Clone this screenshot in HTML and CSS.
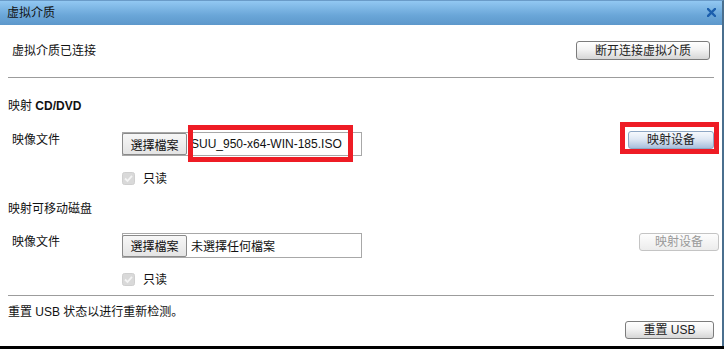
FILE: index.html
```html
<!DOCTYPE html>
<html>
<head>
<meta charset="utf-8">
<link rel="stylesheet" href="styles.css">
</head>
<body>
<div class="dialog">
  <div class="titlebar">
    <span class="title">虚拟介质</span>
    <svg class="close" width="9" height="9" viewBox="0 0 9 9"><path d="M1 1 L8 8 M8 1 L1 8" stroke="#1c5fad" stroke-width="2.4" stroke-linecap="square"/></svg>
  </div>
  <div class="body">
    <div class="row top-row">
      <span class="status">虚拟介质已连接</span>
      <button class="btn btn-disconnect">断开连接虚拟介质</button>
    </div>
    <div class="sep sep1"></div>
    <div class="heading h1">映射 <b>CD/DVD</b></div>
    <div class="row file-row r1">
      <span class="label">映像文件</span>
      <div class="file">
        <span class="file-btn">選擇檔案</span>
        <span class="file-name">SUU_950-x64-WIN-185.ISO</span>
        <span class="mark mark-file"></span>
      </div>
      <div class="right">
        <button class="btn btn-blue">映射设备</button>
        <span class="mark mark-btn"></span>
      </div>
    </div>
    <div class="check-row c1">
      <svg class="cb" width="13" height="13" viewBox="0 0 13 13"><rect x="0.5" y="0.5" width="12" height="12" rx="2" fill="#d9d9d9" stroke="#cfcfcf"/><path d="M3 6.5 L5.5 9 L10 3.8" fill="none" stroke="#f4f4f4" stroke-width="1.8"/></svg>
      <span>只读</span>
    </div>
    <div class="heading h2">映射可移动磁盘</div>
    <div class="row file-row r2">
      <span class="label">映像文件</span>
      <div class="file">
        <span class="file-btn">選擇檔案</span>
        <span class="file-name">未選擇任何檔案</span>
      </div>
      <div class="right">
        <button class="btn btn-disabled">映射设备</button>
      </div>
    </div>
    <div class="check-row c2">
      <svg class="cb" width="13" height="13" viewBox="0 0 13 13"><rect x="0.5" y="0.5" width="12" height="12" rx="2" fill="#d9d9d9" stroke="#cfcfcf"/><path d="M3 6.5 L5.5 9 L10 3.8" fill="none" stroke="#f4f4f4" stroke-width="1.8"/></svg>
      <span>只读</span>
    </div>
    <div class="sep sep2"></div>
    <div class="reset-text">重置 USB 状态以进行重新检测。</div>
    <div class="reset-row">
      <button class="btn btn-reset">重置 USB</button>
    </div>
  </div>
  <div class="footer-bar"></div>
</div>
</body>
</html>
```

FILE: styles.css
```css
html, body {
  margin: 0;
  padding: 0;
  background: #fff;
}
body {
  width: 724px;
  height: 349px;
  overflow: hidden;
  font-family: "Liberation Sans", "Noto Sans CJK SC", sans-serif;
  font-size: 12px;
  color: #111;
}
.dialog {
  width: 724px;
  height: 349px;
  display: flex;
  flex-direction: column;
}
.titlebar {
  height: 25px;
  box-sizing: border-box;
  border-top: 1px solid #6a9bc8;
  border-right: 2px solid #4a6f8e;
  background: linear-gradient(#92c8f2, #6aa6d8 60%, #5d98cb);
  display: flex;
  align-items: center;
  justify-content: space-between;
  padding: 0 6px 0 7px;
}
.title {
  font-size: 12px;
  line-height: 14px;
  color: #111;
}
.close {
  display: block;
  margin-top: -2px;
}
.body {
  flex: 1;
  background: #fff;
  border-right: 2px solid #4a6f8e;
  padding: 0 8px;
  display: flex;
  flex-direction: column;
}
.row {
  display: flex;
}
.top-row {
  margin-top: 16px;
  height: 19px;
  align-items: center;
  justify-content: space-between;
}
.status {
  padding-left: 4px;
  line-height: 14px;
}
.btn {
  font-family: "Liberation Sans", "Noto Sans CJK SC", sans-serif;
  font-size: 12px;
  color: #222;
  padding: 0;
  margin: 0;
  border: 1px solid #7c7c7c;
  border-radius: 3px;
  background: linear-gradient(#ffffff, #f3f3f3 45%, #d6d6d6);
  line-height: 14px;
  box-sizing: border-box;
}
.btn-disconnect {
  width: 134px;
  height: 19px;
  margin-right: 4px;
}
.sep {
  height: 1px;
  background: #9c9c9c;
}
.sep1 {
  margin-top: 17px;
}
.heading {
  line-height: 14px;
  height: 14px;
}
.heading b {
  font-weight: bold;
}
.h1 {
  margin-top: 21px;
}
.file-row {
  align-items: flex-start;
}
.r1 {
  margin-top: 19px;
  height: 24px;
}
.label {
  width: 110px;
  margin-left: 4px;
  line-height: 14px;
  padding-top: 1px;
}
.file {
  position: relative;
  width: 240px;
  height: 24px;
  box-sizing: border-box;
  border: 1px solid #a8a8a8;
  display: flex;
  align-items: center;
}
.file-btn {
  width: 65px;
  height: 22px;
  box-sizing: border-box;
  border: 1px solid #8a8a8a;
  border-radius: 2px;
  background: linear-gradient(#f7f7f7, #e4e4e4);
  display: flex;
  align-items: center;
  justify-content: center;
  color: #111;
  margin-left: -1px;
}
.file-name {
  padding-left: 4px;
  color: #111;
}
.mark {
  position: absolute;
  border: 5px solid #ee1c25;
  box-sizing: border-box;
  pointer-events: none;
}
.mark-file {
  left: 65px;
  top: -8px;
  width: 165px;
  height: 37px;
}
.right {
  position: relative;
  margin-left: auto;
}
.btn-blue {
  width: 86px;
  height: 18px;
  margin-top: -1px;
  border: 1px solid #8ea7c4;
  background: linear-gradient(#f6f9fd, #dfe8f4 45%, #a8bfdc);
  display: block;
}
.mark-btn {
  left: -8px;
  top: -10px;
  width: 99px;
  height: 32px;
}
.check-row {
  display: flex;
  align-items: center;
  height: 13px;
  margin-left: 114px;
  line-height: 14px;
}
.cb {
  display: block;
  margin-right: 8px;
}
.c1 {
  margin-top: 16px;
}
.h2 {
  margin-top: 17px;
}
.r2 {
  margin-top: 17px;
  height: 25px;
}
.r2 .file {
  height: 25px;
}
.r2 .label {
  padding-top: 2px;
}
.btn-disabled {
  width: 80px;
  height: 18px;
  margin-right: -5px;
  color: #9a9a9a;
  border: 1px solid #c4c4c4;
  background: linear-gradient(#fdfdfd, #ececec);
  display: block;
}
.c2 {
  margin-top: 15px;
}
.sep2 {
  margin-top: 9px;
}
.reset-text {
  margin-top: 9px;
  line-height: 14px;
}
.reset-row {
  display: flex;
  justify-content: flex-end;
  margin-top: 2px;
}
.btn-reset {
  width: 89px;
  height: 18px;
}
.footer-bar {
  height: 3px;
  background: #000;
  flex: none;
}
```
